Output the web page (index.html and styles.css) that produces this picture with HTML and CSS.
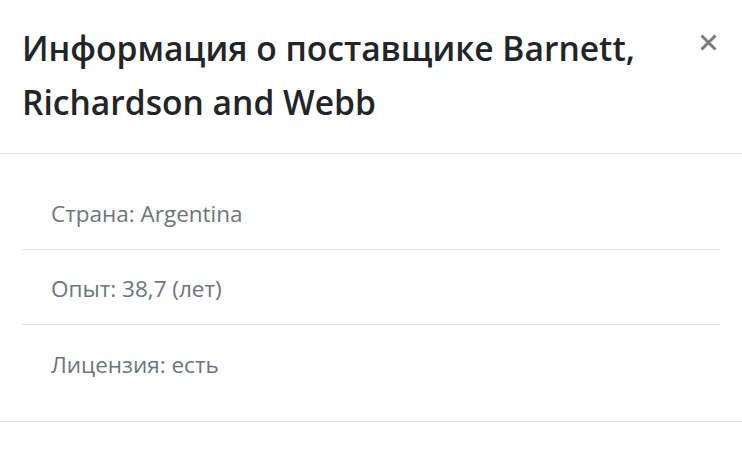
FILE: index.html
```html
<!DOCTYPE html>
<html lang="ru">
<head>
<meta charset="utf-8">
<link rel="stylesheet" href="styles.css">
</head>
<body>
<div class="modal">
  <div class="modal-header">
    <h1 class="modal-title">Информация о поставщике Barnett, Richardson and Webb</h1>
    <button class="close" type="button" aria-label="Close">
      <svg width="17" height="17" viewBox="0 0 17 17" aria-hidden="true">
        <path d="M1.5 1.5 L15.5 15.5 M15.5 1.5 L1.5 15.5" stroke="#7b7b7b" stroke-width="3" stroke-linecap="butt" fill="none"/>
      </svg>
    </button>
  </div>
  <div class="modal-body">
    <ul class="list">
      <li class="item">Страна: Argentina</li>
      <li class="item">Опыт: 38,7 (лет)</li>
      <li class="item">Лицензия: есть</li>
    </ul>
  </div>
  <div class="modal-footer"></div>
</div>
</body>
</html>
```

FILE: styles.css
```css
* { box-sizing: border-box; }
html, body { margin: 0; padding: 0; background: #fff; }
body {
  font-family: "Open Sans", "Noto Sans", sans-serif;
  color: #212529;
  width: 742px;
  height: 453px;
  overflow: hidden;
}
.modal { display: flex; flex-direction: column; }
.modal-header {
  display: flex;
  align-items: flex-start;
  justify-content: space-between;
  padding: 21px 22px 24px 22px;
  border-bottom: 1px solid #dee2e6;
}
.modal-title {
  margin: 0;
  font-size: 33.6px;
  font-weight: 600;
  line-height: 54px;
  color: #212529;
  max-width: 660px;
}
.close {
  display: block;
  border: 0;
  background: transparent;
  padding: 0;
  margin: 13px 3px 0 0;
  line-height: 0;
  cursor: pointer;
}
.modal-body { padding: 21px 22px 21px 22px; }
.list { list-style: none; margin: 0; padding: 0; }
.item {
  padding: 3px 29px 0 29px;
  height: 75px;
  display: flex;
  align-items: center;
  font-size: 22.5px;
  color: #6c757d;
  border-bottom: 1px solid #dee2e6;
}
.item:last-child { border-bottom: 0; }
.modal-footer { border-top: 1px solid #dee2e6; height: 32px; }
```
